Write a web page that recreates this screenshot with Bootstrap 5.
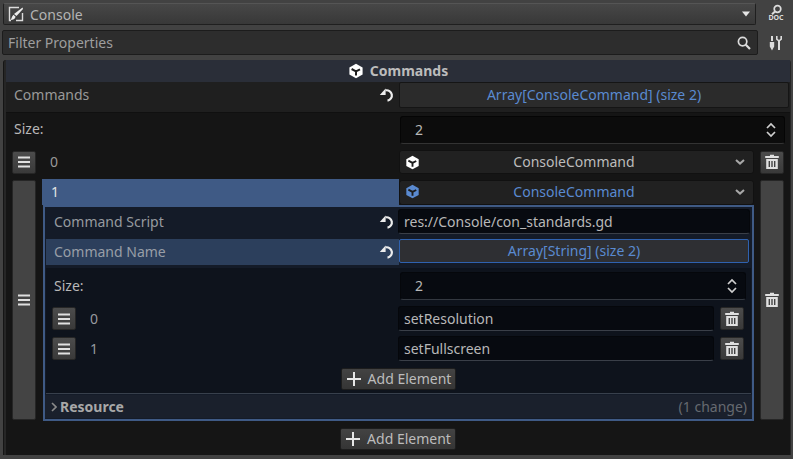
<!DOCTYPE html>
<html lang="en">
<head>
  <meta charset="UTF-8" />
  <meta name="viewport" content="width=device-width, initial-scale=1.0" />
  <title>Inspector - Console</title>
  <link href="https://cdn.jsdelivr.net/npm/bootstrap@5.3.3/dist/css/bootstrap.min.css" rel="stylesheet">
  <style>
    /* page + base text */
    body { background: #424242; width: 793px; height: 459px; overflow: hidden; font-family: "Noto Sans", sans-serif; font-size: 14px; line-height: 20px; color: #b8b8b8; }
    svg { display: block; flex: none; }

    /* top bars */
    .bar-one { height: 22px; margin: 3px 0 5px 3px; }
    .bar-two { height: 25px; margin: 0 0 5px 2px; }
    .obj-select { width: 753px; height: 22px; padding: 0 4px 0 4px; background: linear-gradient(#474747, #383838); border: 1px solid #1f1f1f; border-top-color: #555; border-radius: 2px; color: #b4b4b4; }
    .obj-name { margin-left: 6px; padding-top: 1px; }
    .filter-box { width: 756px; height: 25px; padding: 0 6px 0 5px; background: #2d2d2d; border: 1px solid #1c1c1c; border-radius: 2px; color: #9e9e9e; }
    .bar-icon { width: 34px; padding-left: 6px; }
    .bar-icon-two { padding-left: 2px; }

    /* inspector panel */
    .insp-panel { margin: 0 2px 0 3px; height: 395px; padding: 0 1px 0 2px; background: #262626; border-left: 1px solid #151515; border-radius: 3px 3px 0 0; }
    .sec-head { height: 22px; background: #2a2e38; font-weight: 700; color: #bcbcbc; gap: 6px; }
    .cmd-row { height: 30px; padding-bottom: 4px; background: #1f1f1f; }
    .cmd-label { width: 393px; padding: 0 4px 0 8px; color: #999; }
    .arr-btn { height: 26px; background: #2b2b2b; border: 1px solid #151515; border-radius: 2px; color: #5a8ad0; }
    .cmd-btn { width: 390px; }

    /* array list */
    .list-wrap { height: 343px; padding: 3px 0 0; background: #151515; border-top: 1px solid #101010; }
    .size-row { height: 28px; margin-bottom: 6px; }
    .size-label { width: 394px; padding: 0 0 2px 8px; }
    .num-box { height: 28px; padding: 0 7px 0 14px; background: #0c0c0c; border: 1px solid #050505; border-bottom-color: #333; border-radius: 3px; }
    .outer-num { width: 385px; }
    .el-row { height: 24px; margin-bottom: 5px; }
    .grip-btn { width: 24px; background: linear-gradient(#4c4c4c, #393939); border: 1px solid #262626; border-radius: 2px; }
    .grip-small { height: 23px; }
    .outer-grip { margin-left: 6px; }
    .el-num { width: 363px; padding-left: 14px; color: #999; }
    .res-pick { width: 355px; height: 24px; padding: 0 7px 0 5px; background: #212121; border: 1px solid #111; border-radius: 3px; }
    .res-title { color: #bcbcbc; }
    .pick-text { margin-right: 6px; }
    .is-blue { color: #5a8ad0; }
    .trash-gap { margin-left: 6px; }
    .add-btn { height: 22px; padding: 0 4px; gap: 6px; background: linear-gradient(#434343, #353535); border: 1px solid #1d1d1d; border-radius: 2px; color: #bcbcbc; }

    /* open element */
    .open-el { height: 242px; margin-bottom: 7px; }
    .tall-grip { margin: 1px 0 1px 6px; background: #444; }
    .open-mid { width: 712px; margin-left: 6px; }
    .open-head { height: 26px; }
    .head-num { width: 357px; height: 26px; padding-left: 9px; background: #3f5a85; color: #e4e4e4; }
    .head-pick { height: 25px; margin-top: 1px; padding-bottom: 2px; }
    .open-box { height: 216px; margin-left: 1px; border: 2px solid #3f5a85; background: #141b28; }
    .scr-row { height: 31px; padding-top: 2px; }
    .sub-label { width: 352px; padding: 0 3px 0 8px; margin-left: 1px; color: #969a9f; }
    .scr-label { height: 25px; }
    .line-edit { height: 25px; padding: 0 5px; background: #070a10; border: 1px solid #05070b; border-bottom-color: #3a3f48; border-radius: 3px; }
    .scr-edit { width: 352px; }
    .name-row { height: 27px; padding-top: 1px; }
    .name-label { width: 353px; height: 26px; padding-right: 4px; background: #2c3f5c; color: #989ea7; }
    .name-btn { width: 350px; height: 24px; background: #2e2f33; border: 1px solid #2f62b0; border-radius: 2px; }
    .sub-wrap { height: 126px; margin: 3px 1px 1px 1px; padding: 4px 0 0; background: #0e131c; border-bottom: 1px solid #38404c; }
    .sub-size { height: 28px; margin-bottom: 6px; }
    .sub-size-label { width: 354px; padding-left: 8px; }
    .inner-num { width: 346px; background: #070a10; border-color: #05070b; border-bottom-color: #333840; }
    .str-row { height: 25px; margin-bottom: 5px; }
    .str-num { width: 322px; padding-left: 14px; color: #969a9f; }
    .str-edit { width: 316px; }
    .str-trash { margin-left: 6px; }
    .inner-add { padding-top: 2px; }
    .res-row { height: 23px; padding: 0 5px 0 6px; background: #1a202c; }
    .res-name { font-weight: 700; color: #a8a8a8; margin-left: 3px; }
    .change-txt { color: #666a70; }
  </style>
</head>
<body>
  <!-- icon definitions -->
  <svg width="0" height="0" class="position-absolute">
    <symbol id="ic-reset" viewBox="0 0 16 16">
      <path d="M6.5 3.4A5.2 5.2 0 1 1 8.5 13.6" fill="none" stroke="#ececec" stroke-width="2.2"/>
      <path d="M.8 8 6.6 1.6V8z" fill="#ececec"/>
    </symbol>
    <symbol id="ic-cube" viewBox="0 0 16 16">
      <path d="M8 .8 14.6 4.4V11.6L8 15.2 1.4 11.6V4.4z" fill="currentColor"/>
      <path d="M3.6 6 8 8.4 12 6.4M8 8.4V12.4" fill="none" stroke="#1d1d1d" stroke-width="2"/>
    </symbol>
    <symbol id="ic-grip" viewBox="0 0 16 16">
      <path d="M2 2.5H14V4.5H2zM2 7H14V9H2zM2 11.5H14V13.5H2z" fill="#e0e0e0"/>
    </symbol>
    <symbol id="ic-trash" viewBox="0 0 16 16">
      <path d="M6 .8H10V2H14.8V4H1.2V2H6z" fill="#e0e0e0"/>
      <path d="M2.2 5H13.8V15H2.2zM4.6 7V13H6V7zM7.3 7V13H8.7V7zM10 7V13H11.4V7z" fill="#e0e0e0" fill-rule="evenodd"/>
    </symbol>
    <symbol id="ic-chev" viewBox="0 0 12 8">
      <path d="M2 2 6 5.6 10 2" fill="none" stroke="#a8a8a8" stroke-width="2"/>
    </symbol>
    <symbol id="ic-updown" viewBox="0 0 12 16">
      <path d="M2 6 6 2 10 6M2 10 6 14 10 10" fill="none" stroke="#cfcfcf" stroke-width="1.7"/>
    </symbol>
    <symbol id="ic-plus" viewBox="0 0 16 16">
      <path d="M7 1H9V7H15V9H9V15H7V9H1V7H7z" fill="#e6e6e6"/>
    </symbol>
  </svg>

  <!-- object picker -->
  <div class="bar-one d-flex align-items-center">
    <div class="obj-select d-flex align-items-center">
      <svg width="16" height="16" viewBox="0 0 16 16">
        <path d="M3 14.5H1.5V1.5H11M14.5 7V14.5H8" fill="none" stroke="#dcdcdc" stroke-width="1.4"/>
        <path d="M14.5 1.5 15 3 8.5 10 6 8z" fill="#ececec"/>
        <path d="M5.5 8.8 7.6 10.8C7 13 5 14 2.5 14 3.6 13 3.8 10 5.5 8.8z" fill="#ececec"/>
      </svg>
      <span class="obj-name flex-grow-1">Console</span>
      <svg width="10" height="6" viewBox="0 0 10 6"><path d="M1 .5H9L5 5.5z" fill="#e6e6e6"/></svg>
    </div>
    <div class="bar-icon d-flex justify-content-center">
      <svg width="18" height="20" viewBox="0 0 18 20">
        <circle cx="10.5" cy="5" r="3.3" fill="none" stroke="#dcdcdc" stroke-width="1.7"/>
        <path d="M8 7.4 5 10.2" stroke="#dcdcdc" stroke-width="2"/>
        <text x="9" y="16.4" text-anchor="middle" font-family="Noto Sans, sans-serif" font-size="7" font-weight="700" fill="#dcdcdc">DOC</text>
      </svg>
    </div>
  </div>

  <!-- filter -->
  <div class="bar-two d-flex align-items-center">
    <div class="filter-box d-flex align-items-center justify-content-between">
      <span>Filter Properties</span>
      <svg width="14" height="14" viewBox="0 0 14 14">
        <circle cx="5.6" cy="5.6" r="4.2" fill="none" stroke="#dcdcdc" stroke-width="1.7"/>
        <path d="M8.8 8.8 13 13" stroke="#dcdcdc" stroke-width="2.2"/>
      </svg>
    </div>
    <div class="bar-icon bar-icon-two d-flex justify-content-center">
      <svg width="14" height="16" viewBox="0 0 14 16">
        <path d="M2 1H4V6H2zM.8 7H5.2V11.5L3 15.5.8 11.5z" fill="#dcdcdc"/>
        <path d="M7.8 1V4.2L10 6 12.2 4.2V1" fill="none" stroke="#dcdcdc" stroke-width="1.6"/>
        <path d="M9 6H11V15H9z" fill="#dcdcdc"/>
      </svg>
    </div>
  </div>

  <!-- inspector -->
  <div class="insp-panel">
    <div class="sec-head d-flex align-items-center justify-content-center">
      <svg width="16" height="16" class="text-white"><use href="#ic-cube"/></svg>
      <span>Commands</span>
    </div>
    <div class="cmd-row d-flex align-items-start">
      <div class="cmd-label d-flex align-items-center justify-content-between h-100">
        <span>Commands</span>
        <svg width="16" height="16"><use href="#ic-reset"/></svg>
      </div>
      <div class="arr-btn cmd-btn d-flex align-items-center justify-content-center">Array[ConsoleCommand] (size 2)</div>
    </div>

    <div class="list-wrap">
      <div class="size-row d-flex align-items-center">
        <div class="size-label">Size:</div>
        <div class="num-box outer-num d-flex align-items-center justify-content-between">
          <span>2</span>
          <svg width="12" height="16"><use href="#ic-updown"/></svg>
        </div>
      </div>

      <!-- element 0 -->
      <div class="el-row d-flex align-items-center">
        <div class="grip-btn grip-small outer-grip d-flex align-items-center justify-content-center">
          <svg width="16" height="16"><use href="#ic-grip"/></svg>
        </div>
        <div class="el-num">0</div>
        <div class="res-pick d-flex align-items-center justify-content-between">
          <svg width="15" height="15" class="text-white"><use href="#ic-cube"/></svg>
          <span class="res-title pick-text">ConsoleCommand</span>
          <svg width="12" height="8"><use href="#ic-chev"/></svg>
        </div>
        <div class="grip-btn grip-small trash-gap d-flex align-items-center justify-content-center">
          <svg width="16" height="16"><use href="#ic-trash"/></svg>
        </div>
      </div>

      <!-- element 1 (open) -->
      <div class="open-el d-flex">
        <div class="grip-btn tall-grip d-flex align-items-center justify-content-center">
          <svg width="16" height="16"><use href="#ic-grip"/></svg>
        </div>
        <div class="open-mid">
          <div class="open-head d-flex">
            <div class="head-num d-flex align-items-center">1</div>
            <div class="res-pick head-pick d-flex align-items-center justify-content-between">
              <svg width="15" height="15" class="is-blue"><use href="#ic-cube"/></svg>
              <span class="is-blue pick-text">ConsoleCommand</span>
              <svg width="12" height="8"><use href="#ic-chev"/></svg>
            </div>
          </div>
          <div class="open-box">
            <div class="scr-row d-flex align-items-start">
              <div class="sub-label scr-label d-flex align-items-center justify-content-between">
                <span>Command Script</span>
                <svg width="16" height="16"><use href="#ic-reset"/></svg>
              </div>
              <div class="line-edit scr-edit d-flex align-items-center">res://Console/con_standards.gd</div>
            </div>
            <div class="name-row d-flex align-items-start">
              <div class="sub-label name-label d-flex align-items-center justify-content-between">
                <span>Command Name</span>
                <svg width="16" height="16"><use href="#ic-reset"/></svg>
              </div>
              <div class="arr-btn name-btn d-flex align-items-center justify-content-center">Array[String] (size 2)</div>
            </div>
            <div class="sub-wrap">
              <div class="sub-size d-flex align-items-center">
                <div class="sub-size-label">Size:</div>
                <div class="num-box inner-num d-flex align-items-center justify-content-between">
                  <span>2</span>
                  <svg width="12" height="16"><use href="#ic-updown"/></svg>
                </div>
              </div>
              <div class="str-row d-flex align-items-center">
                <div class="grip-btn grip-small outer-grip d-flex align-items-center justify-content-center">
                  <svg width="16" height="16"><use href="#ic-grip"/></svg>
                </div>
                <div class="str-num">0</div>
                <div class="line-edit str-edit d-flex align-items-center">setResolution</div>
                <div class="grip-btn grip-small str-trash d-flex align-items-center justify-content-center">
                  <svg width="16" height="16"><use href="#ic-trash"/></svg>
                </div>
              </div>
              <div class="str-row d-flex align-items-center">
                <div class="grip-btn grip-small outer-grip d-flex align-items-center justify-content-center">
                  <svg width="16" height="16"><use href="#ic-grip"/></svg>
                </div>
                <div class="str-num">1</div>
                <div class="line-edit str-edit d-flex align-items-center">setFullscreen</div>
                <div class="grip-btn grip-small str-trash d-flex align-items-center justify-content-center">
                  <svg width="16" height="16"><use href="#ic-trash"/></svg>
                </div>
              </div>
              <div class="inner-add d-flex justify-content-center">
                <div class="add-btn d-inline-flex align-items-center">
                  <svg width="16" height="16"><use href="#ic-plus"/></svg>
                  <span>Add Element</span>
                </div>
              </div>
            </div>
            <div class="res-row d-flex align-items-center justify-content-between">
              <div class="d-flex align-items-center">
                <svg width="6" height="10" viewBox="0 0 6 10"><path d="M1 1 5 5 1 9" fill="none" stroke="#8a8a8a" stroke-width="1.6"/></svg>
                <span class="res-name">Resource</span>
              </div>
              <span class="change-txt">(1 change)</span>
            </div>
          </div>
        </div>
        <div class="grip-btn tall-grip trash-gap d-flex align-items-center justify-content-center">
          <svg width="16" height="16"><use href="#ic-trash"/></svg>
        </div>
      </div>

      <div class="d-flex justify-content-center">
        <div class="add-btn d-inline-flex align-items-center">
          <svg width="16" height="16"><use href="#ic-plus"/></svg>
          <span>Add Element</span>
        </div>
      </div>
    </div>
  </div>

  <script src="https://cdn.jsdelivr.net/npm/bootstrap@5.3.3/dist/js/bootstrap.bundle.min.js"></script>
</body>
</html>
